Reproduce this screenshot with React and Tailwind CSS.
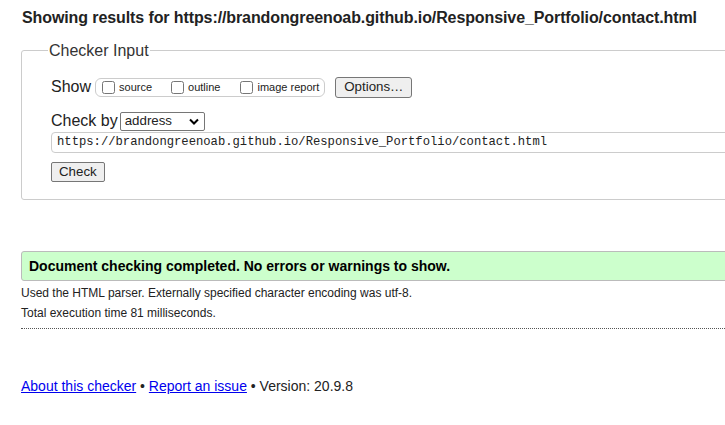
import { useState } from 'react';

const url = 'https://brandongreenoab.github.io/Responsive_Portfolio/contact.html';

function Box({ label, checked, onChange, gap }) {
  return (
    <label className={`flex items-center ${gap}`}>
      <input
        type="checkbox"
        checked={checked}
        onChange={onChange}
        className="m-0 h-[13px] w-[13px]"
      />
      <span className="ml-[4px] text-[11px] leading-[13px]">{label}</span>
    </label>
  );
}

export default function App() {
  const [show, setShow] = useState({ source: false, outline: false, image: false });
  const toggle = (k) => () => setShow({ ...show, [k]: !show[k] });

  return (
    <div className="h-[425px] w-[725px] overflow-hidden bg-white pl-[21px] pt-[8px] text-[#222] [font-family:'Liberation_Sans',Arial,sans-serif]">
      <h2 className="ml-[1px] whitespace-nowrap text-[16px] font-bold leading-[19px] tracking-[-0.1px]">
        Showing results for {url}
      </h2>

      <fieldset className="mt-[14px] w-[740px] rounded-[3px] border border-[#ccc] pb-[16px] pl-[26px]">
        <legend className="px-[1px] text-[16px] leading-[19px] text-[#333]">Checker Input</legend>
        <div className="pl-[3px]">
          <div className="mt-[16px] flex h-[22px] items-center">
            <span className="text-[16px]">Show</span>
            <div className="ml-[4px] flex h-[19px] items-center rounded-[6px] border border-[#ccc] pl-[6px] pr-[5px]">
              <Box label="source" checked={show.source} onChange={toggle('source')} gap="" />
              <Box label="outline" checked={show.outline} onChange={toggle('outline')} gap="ml-[19px]" />
              <Box label="image report" checked={show.image} onChange={toggle('image')} gap="ml-[20px]" />
            </div>
            <button type="button" className="ml-[10px] h-[21px] rounded-[3px] border border-[#767676] bg-[#efefef] px-[8px] text-[13.3px] leading-[18px]">
              Options…
            </button>
          </div>

          <div className="mt-[13px] flex h-[20px] items-center">
            <span className="text-[16px]">Check by</span>
            <div className="ml-[2px] flex h-[19px] w-[85px] items-center justify-between rounded-[2px] border border-[#767676] pl-[4px] pr-[5px] text-[13.3px]">
              <span>address</span>
              <svg width="10" height="7" viewBox="0 0 10 7" fill="none" stroke="#000" strokeWidth="2">
                <path d="M1 1.5l4 4 4-4" />
              </svg>
            </div>
          </div>

          <div className="mt-[1px] flex h-[21px] w-[720px] items-center rounded-[4px] border border-[#ccc] pl-[5px] text-[12.2px] [font-family:'Liberation_Mono',monospace]">
            {url}
          </div>

          <button type="button" className="mt-[9px] h-[20px] rounded-[2px] border border-[#767676] bg-[#efefef] px-[7px] text-[13.3px] leading-[18px]">
            Check
          </button>
        </div>
      </fieldset>

      <div className="mt-[51px] flex h-[30px] w-[740px] items-center rounded-[3px] border border-[#bbb] bg-[#ccffcc] pl-[7px] text-[14px] font-bold text-black">
        Document checking completed. No errors or warnings to show.
      </div>

      <p className="mt-[2px] text-[12px] leading-[20px]">
        Used the HTML parser. Externally specified character encoding was utf-8.
      </p>
      <p className="text-[12px] leading-[20px]">Total execution time 81 milliseconds.</p>
      <div className="mt-[5px] w-[740px] border-t border-dotted border-[#555]" />

      <p className="mt-[49px] text-[14px] leading-[16px]">
        <a href="#about" className="text-[#0000ee] underline">About this checker</a>
        {' • '}
        <a href="#issue" className="text-[#0000ee] underline">Report an issue</a>
        {' • Version: 20.9.8'}
      </p>
    </div>
  );
}
